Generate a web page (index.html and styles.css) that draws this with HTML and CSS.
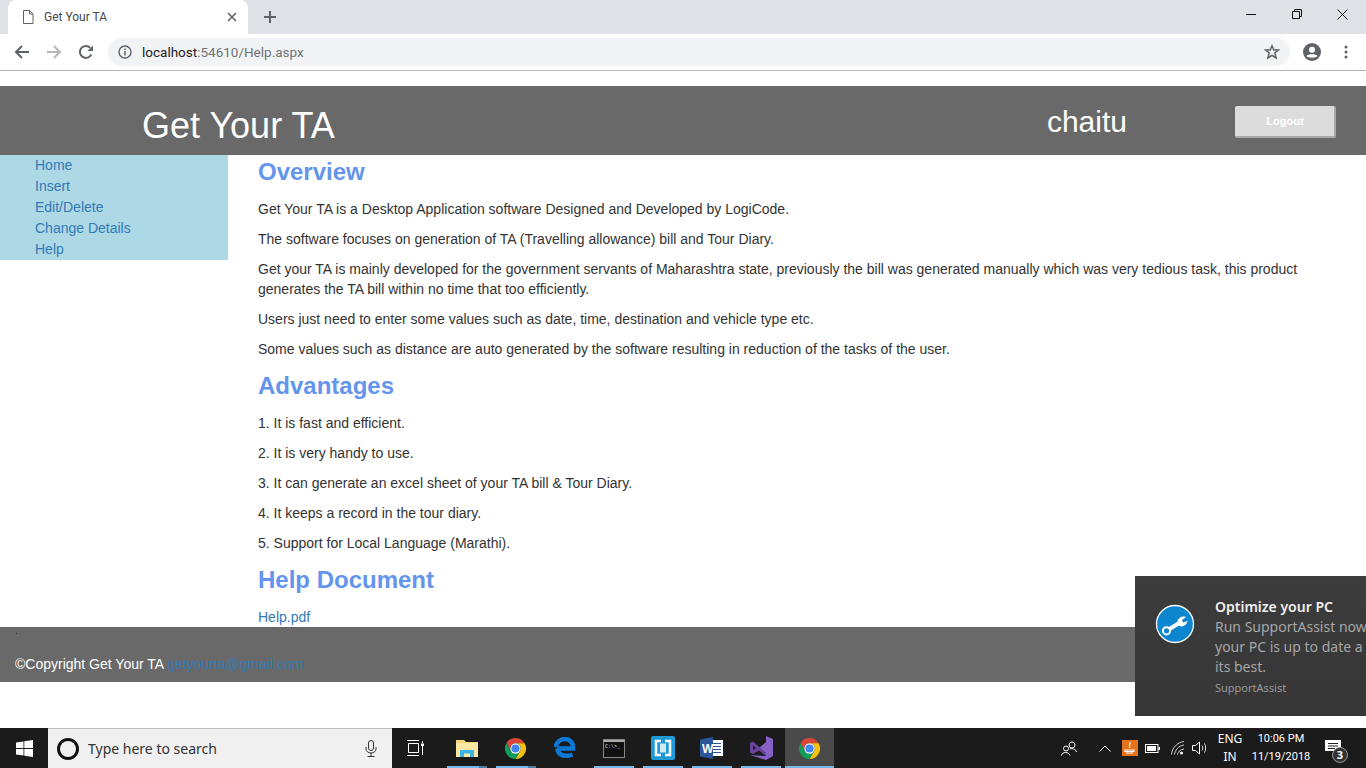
FILE: index.html
```html
<!DOCTYPE html>
<html lang="en">
<head>
    <meta charset="UTF-8">
    <title>Get Your TA</title>
    <link rel="stylesheet" href="styles.css">
</head>
<body>
    <svg class="defs" width="0" height="0">
        <symbol id="chrome" viewBox="0 0 24 24">
            <path fill="#db4437" d="M2.47 6.5A11 11 0 0 1 21.53 6.5H12A5.5 5.5 0 0 0 7.24 14.75Z"/>
            <path fill="#f4c20d" d="M21.53 6.5A11 11 0 0 1 12 23L16.76 14.75A5.5 5.5 0 0 0 12 6.5Z"/>
            <path fill="#0f9d58" d="M12 23A11 11 0 0 1 2.47 6.5L7.24 14.75A5.5 5.5 0 0 0 16.76 14.75Z"/>
            <circle cx="12" cy="12" r="5.4" fill="#fff"/>
            <circle cx="12" cy="12" r="4.3" fill="#4285f4"/>
        </symbol>
    </svg>

    <div class="tabstrip">
        <div class="tab">
            <svg class="tab-icon" width="12" height="14" viewBox="0 0 12 14"><path d="M1.5.5H7.5L11 4V13.5H1.5ZM7.5.5V4H11" fill="none" stroke="#5f6368"/></svg>
            <span class="tab-title">Get Your TA</span>
            <svg class="tab-close" width="10" height="10" viewBox="0 0 10 10"><path d="M1 1L9 9M9 1L1 9" stroke="#5f6368" stroke-width="1.6"/></svg>
        </div>
        <svg class="tab-new" width="12" height="12" viewBox="0 0 12 12"><path d="M6 0V12M0 6H12" stroke="#5f6368" stroke-width="2"/></svg>
        <div class="window-controls">
            <svg width="10" height="10" viewBox="0 0 10 10"><path d="M0 5.5H10" stroke="#111"/></svg>
            <svg width="10" height="10" viewBox="0 0 10 10"><path d="M.5 2.5H7.5V9.5H.5ZM2.5 2.5V.5H9.5V7.5H7.5" fill="none" stroke="#111"/></svg>
            <svg width="11" height="11" viewBox="0 0 11 11"><path d="M.5.5L10.5 10.5M10.5.5L.5 10.5" stroke="#111"/></svg>
        </div>
    </div>

    <div class="toolbar">
        <svg class="nav" width="16" height="16" viewBox="0 0 16 16"><path d="M15 8H2M8 2L2 8L8 14" fill="none" stroke="#5f6368" stroke-width="2"/></svg>
        <svg class="nav" width="16" height="16" viewBox="0 0 16 16"><path d="M1 8H14M8 2L14 8L8 14" fill="none" stroke="#b6b8bb" stroke-width="2"/></svg>
        <svg class="nav" width="16" height="16" viewBox="0 0 16 16"><path d="M13.3 10.5A6 6 0 1 1 12.2 3.7" fill="none" stroke="#5f6368" stroke-width="2"/><path d="M9.5 7H15V1.500Z" fill="#5f6368"/></svg>
        <div class="omnibox">
            <svg width="14" height="14" viewBox="0 0 14 14"><circle cx="7" cy="7" r="6" fill="none" stroke="#5f6368" stroke-width="1.400"/><path d="M7 6V10.500M7 3.500V5" stroke="#5f6368" stroke-width="1.500"/></svg>
            <span class="url"><span class="url-host">localhost</span>:54610/Help.aspx</span>
            <svg class="star" width="16" height="16" viewBox="0 0 16 16"><path d="M8 1.800L9.800 6H14.500L10.800 9L12.100 14L8 11.300L3.900 14L5.200 9L1.500 6H6.200Z" fill="none" stroke="#5f6368" stroke-width="1.500"/></svg>
        </div>
        <svg class="profile" width="18" height="18" viewBox="0 0 18 18"><circle cx="9" cy="9" r="9" fill="#5f6368"/><circle cx="9" cy="6.800" r="3" fill="#fff"/><path d="M3.500 13C5 10.800 13 10.800 14.500 13C13 15.300 5 15.300 3.500 13Z" fill="#fff"/></svg>
        <svg class="menu" width="4" height="14" viewBox="0 0 4 14"><circle cx="2" cy="2" r="1.500" fill="#5f6368"/><circle cx="2" cy="7" r="1.500" fill="#5f6368"/><circle cx="2" cy="12" r="1.500" fill="#5f6368"/></svg>
    </div>

    <div class="page">
        <header class="site-header">
            <h1 class="site-title">Get Your TA</h1>
            <span class="user-name">chaitu</span>
            <button class="logout">Logout</button>
        </header>
        <div class="site-body">
            <nav class="sidebar">
                <a href="#">Home</a>
                <a href="#">Insert</a>
                <a href="#">Edit/Delete</a>
                <a href="#">Change Details</a>
                <a href="#">Help</a>
            </nav>
            <main class="content">
                <h3>Overview</h3>
                <p>Get Your TA is a Desktop Application software Designed and Developed by LogiCode.</p>
                <p>The software focuses on generation of TA (Travelling allowance) bill and Tour Diary.</p>
                <p>Get your TA is mainly developed for the government servants of Maharashtra state, previously the bill was generated manually which was very tedious task, this product generates the TA bill within no time that too efficiently.</p>
                <p>Users just need to enter some values such as date, time, destination and vehicle type etc.</p>
                <p>Some values such as distance are auto generated by the software resulting in reduction of the tasks of the user.</p>
                <h3>Advantages</h3>
                <p>1. It is fast and efficient.</p>
                <p>2. It is very handy to use.</p>
                <p>3. It can generate an excel sheet of your TA bill &amp; Tour Diary.</p>
                <p>4. It keeps a record in the tour diary.</p>
                <p>5. Support for Local Language (Marathi).</p>
                <h3>Help Document</h3>
                <a href="#">Help.pdf</a>
            </main>
        </div>
        <footer class="site-footer">
            <span class="footer-dot">.</span>
            <span>©Copyright Get Your TA <a href="#">getyourta@gmail.com</a></span>
        </footer>

        <aside class="toast">
            <svg class="toast-icon" width="40" height="40" viewBox="0 0 40 40">
                <circle cx="20" cy="20" r="18.500" fill="#0b86cf" stroke="#fff" stroke-width="1.300"/>
                <path d="M12 26.500L23.500 19.500" stroke="#fff" stroke-width="4"/>
                <circle cx="11.500" cy="26.800" r="3.600" fill="#0b86cf" stroke="#fff" stroke-width="2"/>
                <path d="M22 20C22 14 27 11.500 31 13L27 16L28 18.500L32.500 17C32 21 27 24 24 21.500Z" fill="#fff"/>
            </svg>
            <div class="toast-text">
                <div class="toast-title">Optimize your PC</div>
                <div>Run SupportAssist now</div>
                <div>your PC is up to date a</div>
                <div>its best.</div>
                <div class="toast-source">SupportAssist</div>
            </div>
        </aside>
    </div>

    <div class="taskbar">
        <div class="start">
            <svg width="17" height="17" viewBox="0 0 17 17"><path fill="#fff" d="M0 2.500L7.500 1.400V8H0ZM8.300 1.300L17 0V8H8.300ZM0 9H7.500V15.600L0 14.500ZM8.300 9H17V17L8.300 15.700Z"/></svg>
        </div>
        <div class="search">
            <svg width="24" height="24" viewBox="0 0 24 24"><circle cx="12" cy="12" r="9.500" fill="none" stroke="#111" stroke-width="3"/></svg>
            <span class="search-text">Type here to search</span>
            <svg class="mic" width="12" height="17" viewBox="0 0 12 17"><rect x="3.500" y=".5" width="5" height="10" rx="2.500" fill="none" stroke="#333"/><path d="M1 7V9A5 4 0 0 0 11 9V7M6 13V16M2.500 16.500H9.500" fill="none" stroke="#333"/></svg>
        </div>
        <div class="task-view">
            <svg width="18" height="16" viewBox="0 0 18 16"><path d="M0 .5H12M0 15.500H12M1.500 3.500H11.500V12.500H1.500ZM15.500 1V3M15.500 6V15" fill="none" stroke="#fff"/><rect x="14" y="3.500" width="3" height="2.500" fill="#fff"/></svg>
        </div>
        <div class="apps">
            <div class="app running split">
                <svg width="22" height="20" viewBox="0 0 22 20"><path d="M0 2H8L10 4H22V19H0Z" fill="#f6d57a"/><path d="M0 5H22V19H0Z" fill="#fbe8a4"/><path d="M4 19V12H18V19H14V15.500H8V19Z" fill="#3db5e8"/></svg>
            </div>
            <div class="app running split">
                <svg width="23" height="23"><use href="#chrome"/></svg>
            </div>
            <div class="app">
                <svg width="22" height="22" viewBox="0 0 22 22"><path d="M3.500 11.500H19C19.500 5 15 2 11 2C6 2 2.500 6 1.500 10M3.500 11.500C3.500 17 9.500 21 18.500 17.500" fill="none" stroke="#0a78d7" stroke-width="4.500"/></svg>
            </div>
            <div class="app running">
                <svg width="22" height="19" viewBox="0 0 22 19"><rect x=".5" y=".5" width="21" height="18" fill="#111" stroke="#888"/><rect x="1" y="1" width="20" height="2" fill="#aaa"/><text x="2" y="9" class="cmd-text">C:\&gt;_</text></svg>
            </div>
            <div class="app running">
                <svg width="24" height="24" viewBox="0 0 24 24"><rect width="24" height="24" rx="2" fill="#1e9bd7"/><path d="M10 5H5V19H10M14 5H19V19H14" fill="none" stroke="#fff" stroke-width="2.500"/><rect x="9" y="7.500" width="6" height="9" fill="#cfe9f6"/></svg>
            </div>
            <div class="app running">
                <svg width="23" height="22" viewBox="0 0 23 22"><rect x="10" y="3" width="13" height="16" fill="#fff"/><path d="M13 6.500H21M13 9.500H21M13 12.500H21M13 15.500H21" stroke="#2b579a"/><path d="M0 2.500L13 0V22L0 19.500Z" fill="#2b579a"/><text x="2" y="15.500" class="word-text">W</text></svg>
            </div>
            <div class="app running">
                <svg width="24" height="24" viewBox="0 0 24 24"><path d="M17 0L24 3V20L17 24L1 19L17 20ZM17 6L10 12L17 17Z" fill="#8661c5"/><path d="M1 7L4 5.500L17 17V20L10 14.500L4 18L1 16.500ZM4 9.500V14L7 12Z" fill="#68449e"/></svg>
            </div>
            <div class="app running active">
                <svg width="23" height="23"><use href="#chrome"/></svg>
            </div>
        </div>
        <div class="tray">
            <svg class="tray-people" width="16" height="15" viewBox="0 0 16 15"><circle cx="11" cy="4" r="3" fill="none" stroke="#fff"/><circle cx="5" cy="7.500" r="2.500" fill="none" stroke="#fff"/><path d="M.5 14.500C1 10.500 8 10.500 9 14.500M9 8C11 7 15 8 15.500 11" fill="none" stroke="#fff"/></svg>
            <svg class="tray-chevron" width="12" height="7" viewBox="0 0 12 7"><path d="M.5 6.500L6 1L11.500 6.500" fill="none" stroke="#fff"/></svg>
            <svg class="tray-java" width="16" height="16" viewBox="0 0 16 16"><rect width="16" height="16" fill="#e8711c"/><path d="M8 2C9 4 6 5 8 8M3 10H12V11.500H3ZM4 13H11" fill="none" stroke="#fff" stroke-width="1.200"/></svg>
            <svg class="tray-battery" width="15" height="9" viewBox="0 0 15 9"><rect x=".5" y=".5" width="12.500" height="8" fill="none" stroke="#fff"/><rect x="2" y="2" width="9" height="5" fill="#fff"/><rect x="13.500" y="3" width="1.500" height="3" fill="#fff"/></svg>
            <svg class="tray-wifi" width="14" height="14" viewBox="0 0 14 14"><path d="M.5 13.500C1 7 6 1.500 13 .5M3.500 13.500C4 9.500 7 5 13 4M6.500 13.500C7 11 9 8.500 13 8" fill="none" stroke="#ccc"/><circle cx="10.500" cy="12" r="1.500" fill="#fff"/></svg>
            <svg class="tray-volume" width="16" height="14" viewBox="0 0 16 14"><path d="M.5 4.500H3.500L7.500 1V13L3.500 9.500H.5Z" fill="none" stroke="#fff"/><path d="M10 4.500C11 6 11 8 10 9.500M12.500 2.500C14 5 14 9 12.500 11.500" fill="none" stroke="#ddd"/></svg>
            <div class="tray-lang"><div>ENG</div><div>IN</div></div>
            <div class="tray-clock"><div>10:06 PM</div><div>11/19/2018</div></div>
            <div class="tray-notify">
                <svg width="16" height="14" viewBox="0 0 16 14"><path d="M0 0H16V11H11L8 14V11H0Z" fill="#fff"/><path d="M3 3.500H13M3 6H13M3 8.500H10" stroke="#222"/></svg>
                <span class="notify-badge">3</span>
            </div>
        </div>
    </div>
</body>
</html>
```

FILE: styles.css
```css
* {
    box-sizing: border-box;
}
html, body {
    margin: 0;
    height: 768px;
    overflow: hidden;
}
body {
    display: flex;
    flex-direction: column;
    font-family: "Liberation Sans", Arial, sans-serif;
    font-size: 14px;
    line-height: 20px;
    color: #333;
    background: #fff;
}
a {
    color: #337ab7;
    text-decoration: none;
}
svg {
    display: block;
    flex: none;
}
.defs {
    position: absolute;
}

/* browser chrome */
.tabstrip {
    display: flex;
    align-items: center;
    height: 34px;
    background: #dee1e6;
}
.tab {
    display: flex;
    align-items: center;
    width: 240px;
    height: 34px;
    margin-left: 8px;
    padding: 0 11px 0 14px;
    background: #fff;
    border-radius: 8px 8px 0 0;
}
.tab-title {
    margin-left: 10px;
    font-family: Roboto, sans-serif;
    font-size: 12px;
    color: #45474a;
}
.tab-close {
    margin-left: auto;
}
.tab-new {
    margin-left: 16px;
}
.window-controls {
    display: flex;
    align-items: center;
    gap: 36px;
    margin-left: auto;
    margin-right: 18px;
    margin-top: -6px;
}
.window-controls svg:last-child {
    margin-left: -1px;
}
.toolbar {
    display: flex;
    align-items: center;
    height: 37px;
    padding: 0 0 1px 14px;
    background: #fff;
    border-bottom: 1px solid #b5b5b5;
}
.nav {
    margin-right: 16px;
}
.omnibox {
    display: flex;
    align-items: center;
    width: 1182px;
    height: 28px;
    margin-left: -2px;
    padding: 0 10px 0 10px;
    background: #f1f3f4;
    border-radius: 14px;
}
.url {
    margin-left: 10px;
    font-family: Roboto, sans-serif;
    font-size: 13.5px;
    color: #6f7377;
}
.url-host {
    color: #222;
}
.star {
    margin-left: auto;
}
.profile {
    margin-left: 13px;
}
.menu {
    margin-left: 23px;
}

/* site */
.page {
    position: relative;
    height: 657px;
    padding-top: 15px;
}
.site-header {
    display: flex;
    align-items: center;
    height: 69px;
    padding: 0 30px 0 142px;
    background: #696969;
    color: #fff;
}
.site-title {
    margin: 10px 0 0;
    font-size: 36px;
    font-weight: 400;
    line-height: 40px;
}
.user-name {
    margin-left: auto;
    margin-right: 108px;
    margin-top: 3px;
    font-size: 30px;
    line-height: 34px;
}
.logout {
    width: 101px;
    height: 32px;
    margin-top: 3px;
    padding: 0 0 0 1px;
    border: 0;
    border-right: 2px solid #a9a9a9;
    border-bottom: 2px solid #a9a9a9;
    border-radius: 2px;
    background: #dcdcdc;
    font-family: inherit;
    font-size: 11px;
    font-weight: 700;
    color: #fff;
}
.site-body {
    display: flex;
    height: 472px;
}
.sidebar {
    display: flex;
    flex-direction: column;
    flex: none;
    width: 228px;
    height: 105px;
    padding-left: 35px;
    background: #add8e6;
    line-height: 21px;
}
.content {
    flex: 1;
    padding: 0 40px 0 30px;
}
.content h3 {
    margin: 14px 0;
    font-size: 24px;
    line-height: 26px;
    color: #6495ed;
}
.content h3:first-child {
    margin-top: 4px;
}
.content p {
    margin: 0 0 10px;
}
.content p + h3 {
    margin-top: 14px;
}
.site-footer {
    display: flex;
    flex-direction: column;
    justify-content: space-between;
    height: 55px;
    padding: 0 15px 8px;
    background: #696969;
    color: #fff;
}
.footer-dot {
    font-size: 10px;
    line-height: 8px;
    color: #222;
}

/* notification */
.toast {
    position: absolute;
    top: 505px;
    right: 0;
    display: flex;
    width: 231px;
    height: 140px;
    padding: 20px 0 0 20px;
    background: linear-gradient(#3c3c3c, #363636);
    overflow: hidden;
    font-family: "Noto Sans", sans-serif;
    font-size: 14px;
    color: #a6a6a6;
    white-space: nowrap;
}
.toast-icon {
    margin-top: 8px;
}
.toast-text {
    margin-left: 20px;
    margin-top: 1px;
}
.toast-title {
    font-weight: 600;
    color: #efefef;
}
.toast-source {
    margin-top: 1px;
    font-size: 11px;
    color: #999;
}

/* windows taskbar */
.taskbar {
    display: flex;
    height: 40px;
    background: #1b1b1b;
    color: #fff;
    font-family: "Noto Sans", sans-serif;
}
.start {
    display: flex;
    align-items: center;
    justify-content: center;
    width: 48px;
}
.search {
    display: flex;
    align-items: center;
    width: 344px;
    padding: 0 15px 0 8px;
    background: #f0f0f0;
    border-top: 1px solid #bbb;
    color: #333;
}
.search-text {
    margin-left: 8px;
    font-size: 14px;
}
.mic {
    margin-left: auto;
}
.task-view {
    display: flex;
    align-items: center;
    justify-content: center;
    width: 48px;
}
.apps {
    display: flex;
    margin-left: 2px;
}
.app {
    display: flex;
    align-items: center;
    justify-content: center;
    position: relative;
    width: 49px;
}
.app.running::after {
    content: "";
    position: absolute;
    left: 5px;
    right: 4px;
    bottom: 0;
    height: 2px;
    background: #76b9ed;
}
.app.split::before {
    content: "";
    position: absolute;
    right: 4px;
    bottom: 0;
    width: 8px;
    height: 2px;
    background: #4c7ea3;
    z-index: 1;
}
.app.active {
    background: #4a4a4a;
}
.app.active::after {
    left: 0;
    right: 0;
}
.cmd-text {
    font-family: "Liberation Mono", monospace;
    font-size: 5px;
    fill: #ddd;
}
.word-text {
    font-family: "Liberation Sans", sans-serif;
    font-size: 12px;
    font-weight: 700;
    fill: #fff;
}
.tray {
    display: flex;
    align-items: center;
    margin-left: auto;
    font-size: 12px;
    line-height: 18px;
}
.tray-people {
    margin-right: 22px;
}
.tray-chevron {
    margin-right: 11px;
}
.tray-java {
    margin-right: 7px;
}
.tray-battery {
    margin-right: 11px;
}
.tray-wifi {
    margin-right: 7px;
}
.tray-volume {
    margin-right: 8px;
}
.tray-lang {
    width: 28px;
    text-align: center;
}
.tray-clock {
    width: 74px;
    font-family: Roboto, sans-serif;
    font-size: 11px;
    text-align: center;
}
.tray-notify {
    position: relative;
    width: 48px;
    height: 40px;
    padding: 12px 0 0 7px;
}
.notify-badge {
    position: absolute;
    top: 19px;
    left: 14px;
    width: 16px;
    height: 16px;
    border: 1px solid #999;
    border-radius: 50%;
    background: #333;
    font-size: 11px;
    font-weight: 700;
    line-height: 14px;
    text-align: center;
}
```
